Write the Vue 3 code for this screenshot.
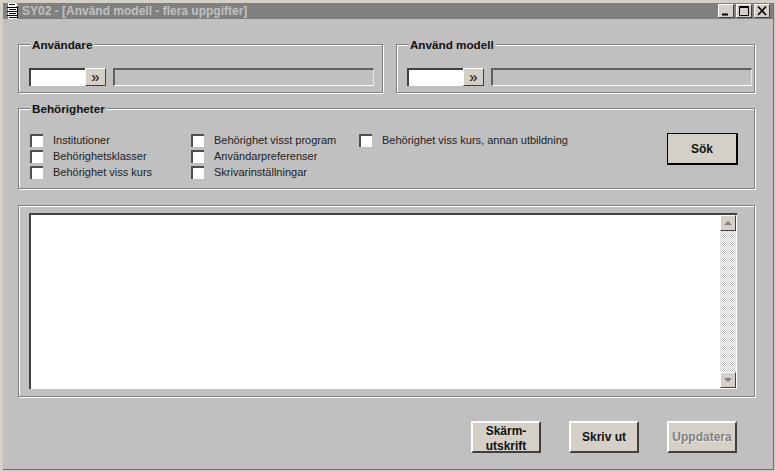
<script setup>
const topGroups = [
  { title: "Användare", grow: 365 },
  { title: "Använd modell", grow: 359 },
];

const permissionColumns = [
  { width: 161, items: ["Institutioner", "Behörighetsklasser", "Behörighet viss kurs"] },
  { width: 168, items: ["Behörighet visst program", "Användarpreferenser", "Skrivarinställningar"] },
  { width: 300, items: ["Behörighet viss kurs, annan utbildning"] },
];
</script>

<template>
  <div class="window">
    <div class="titlebar">
      <svg class="app-icon" width="14" height="16" viewBox="0 0 14 16">
        <path d="M2 0h8l2 2v14H2z" fill="#fff" />
        <path d="M3 1.500h6M1 4.500h11M3 6.500h7M1 8.500h11M3 10.500h7M1 12.500h11M3 14.500h8M11.500 3v12.500" stroke="#000" fill="none" />
      </svg>
      <span class="title">SY02 - [Använd modell - flera uppgifter]</span>
      <div class="win-buttons">
        <button class="win-btn">
          <svg width="14" height="12" viewBox="0 0 14 12"><path d="M3 8.500h6v2H3z" fill="#000" /></svg>
        </button>
        <button class="win-btn">
          <svg width="14" height="12" viewBox="0 0 14 12"><path d="M2.500 1.500h9v9h-9zM2 2.500h10" fill="none" stroke="#000" /></svg>
        </button>
        <button class="win-btn">
          <svg width="14" height="12" viewBox="0 0 14 12"><path d="M3 1.500l8 8.500M11 1.500l-8 8.500" fill="none" stroke="#000" stroke-width="1.700" /></svg>
        </button>
      </div>
    </div>

    <div class="client">
      <div class="top-row">
        <section v-for="g in topGroups" :key="g.title" class="group top-group" :style="{ flexGrow: g.grow }">
          <h3 class="legend">{{ g.title }}</h3>
          <div class="lookup">
            <div class="field"></div>
            <button class="more">»</button>
            <div class="readonly"></div>
          </div>
        </section>
      </div>

      <section class="group perms">
        <h3 class="legend">Behörigheter</h3>
        <div class="perm-body">
          <div v-for="(col, i) in permissionColumns" :key="i" class="perm-col" :style="{ width: col.width + 'px' }">
            <label v-for="item in col.items" :key="item" class="check">
              <span class="box"></span>
              <span class="check-text">{{ item }}</span>
            </label>
          </div>
          <button class="btn btn-default">Sök</button>
        </div>
      </section>

      <section class="group list-group">
        <div class="list">
          <div class="list-body"></div>
          <div class="scrollbar">
            <button class="scroll-btn"><span class="arrow-up"></span></button>
            <div class="track"></div>
            <button class="scroll-btn"><span class="arrow-down"></span></button>
          </div>
        </div>
      </section>

      <div class="actions">
        <button class="btn btn-small">Skärm-<br />utskrift</button>
        <button class="btn btn-small">Skriv ut</button>
        <button class="btn btn-small disabled">Uppdatera</button>
      </div>
    </div>
  </div>
</template>

<style>
html,
body {
  margin: 0;
  overflow: hidden;
  background: #c0c0c0;
}
</style>

<style scoped>
.window {
  box-sizing: border-box;
  width: 776px;
  height: 472px;
  display: flex;
  flex-direction: column;
  padding: 3px;
  background: #c0c0c0;
  box-shadow: inset 3px 3px 0 #d4d0c8, inset -2px -2px 0 #d4d0c8, inset -3px -3px 0 #707070;
  font-family: "Liberation Sans", Arial, sans-serif;
  color: #000;
}

.titlebar {
  height: 16px;
  display: flex;
  align-items: center;
  background: #808080;
  flex-shrink: 0;
}

.app-icon {
  margin-left: 3px;
  margin-right: 2px;
  flex-shrink: 0;
}

.title {
  font-size: 12px;
  font-weight: bold;
  color: #c0c0c0;
  white-space: nowrap;
}

.win-buttons {
  margin-left: auto;
  display: flex;
  gap: 2px;
  margin-right: 3px;
}

.win-btn {
  width: 16px;
  height: 14px;
  padding: 0;
  display: flex;
  align-items: center;
  justify-content: center;
  background: #d4d0c8;
  border: 1px solid;
  border-color: #fff #404040 #404040 #fff;
}

.client {
  flex: 1;
  display: flex;
  flex-direction: column;
  padding: 25px 18px 0 15px;
}

.top-row {
  display: flex;
  gap: 13px;
}

.group {
  box-sizing: border-box;
  border: 1px solid #808080;
  box-shadow: 1px 1px 0 #fff, inset 1px 1px 0 #fff;
}

.top-group {
  flex: 1 1 0;
  height: 49px;
  padding: 0 0 0 10px;
}

.legend {
  display: table;
  margin: -7px 0 0 1px;
  padding: 0 2px;
  background: #c0c0c0;
  font-size: 11.700px;
  line-height: 14px;
  font-weight: bold;
  color: #111;
}

.lookup {
  display: flex;
  align-items: center;
  margin-top: 16px;
  height: 18px;
}

.field {
  box-sizing: border-box;
  width: 56px;
  height: 18px;
  background: #fff;
  border-top: 2px solid #404040;
  border-left: 2px solid #404040;
}

.more {
  box-sizing: border-box;
  width: 21px;
  height: 18px;
  padding: 0 0 3px;
  font: 15px/1 "Liberation Sans", Arial, sans-serif;
  background: #d4d0c8;
  color: #000;
  border: 1px solid;
  border-color: #fff #404040 #404040 #fff;
}

.readonly {
  box-sizing: border-box;
  width: 261px;
  height: 18px;
  margin-left: 7px;
  border-top: 2px solid #606060;
  border-left: 2px solid #606060;
  border-right: 1px solid #e6e6e6;
  border-bottom: 1px solid #fff;
}

.perms {
  height: 81px;
  margin-top: 15px;
  padding: 0 16px 0 11px;
}

.perms .legend {
  margin-left: 0;
}

.perm-body {
  display: flex;
  margin-top: 17px;
  align-items: flex-start;
}

.perm-col {
  display: flex;
  flex-direction: column;
  gap: 3px;
  flex-shrink: 0;
  margin-top: 1px;
}

.check {
  display: flex;
  align-items: center;
  height: 13px;
  gap: 10px;
  font-size: 11px;
  color: #222;
  white-space: nowrap;
}

.check-text {
  margin-top: -1px;
}

.box {
  box-sizing: border-box;
  width: 13px;
  height: 13px;
  background: #fff;
  border-top: 2px solid #505050;
  border-left: 2px solid #505050;
}

.btn {
  box-sizing: border-box;
  padding: 1px 0 0;
  background: #d4d0c8;
  color: #111;
  font: bold 12px/15px "Liberation Sans", Arial, sans-serif;
  border: 2px solid;
  border-color: #fff #404040 #404040 #fff;
}

.btn-default {
  width: 71px;
  height: 32px;
  margin-left: auto;
  border-color: #000;
  border-width: 1px 2px 2px 1px;
}

.list-group {
  height: 192px;
  margin-top: 16px;
  padding: 7px 17px 7px 10px;
}

.list {
  box-sizing: border-box;
  height: 100%;
  display: flex;
  background: #fff;
  border-top: 2px solid #404040;
  border-left: 2px solid #404040;
}

.list-body {
  flex: 1;
}

.scrollbar {
  width: 17px;
  display: flex;
  flex-direction: column;
  padding-bottom: 1px;
}

.scroll-btn {
  box-sizing: border-box;
  flex-shrink: 0;
  width: 16px;
  height: 16px;
  padding: 0;
  display: flex;
  align-items: center;
  justify-content: center;
  background: #d4d0c8;
  border: 1px solid;
  border-color: #fff #404040 #404040 #fff;
}

.arrow-up,
.arrow-down {
  width: 0;
  height: 0;
  border-left: 4px solid transparent;
  border-right: 4px solid transparent;
}

.arrow-up {
  border-bottom: 4px solid #808080;
}

.arrow-down {
  border-top: 4px solid #808080;
}

.track {
  flex: 1;
  width: 16px;
  background: repeating-conic-gradient(#c8c8c8 0 25%, #fff 0 50%) 0 0 / 2px 2px;
}

.actions {
  display: flex;
  justify-content: flex-end;
  gap: 28px;
  margin-top: 24px;
  padding-right: 18px;
}

.btn-small {
  width: 70px;
  height: 32px;
}

.disabled {
  color: #808080;
  text-shadow: 1px 1px 0 #eeeae2;
}
</style>
